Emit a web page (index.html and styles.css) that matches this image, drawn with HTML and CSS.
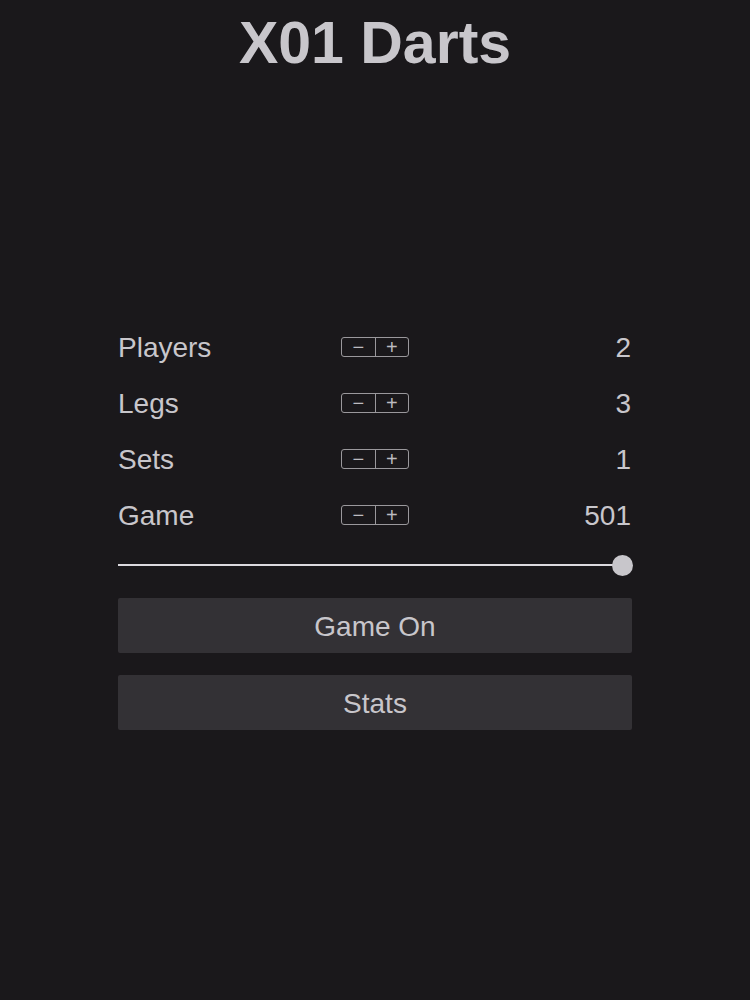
FILE: index.html
```html
<!DOCTYPE html>
<html>
<head>
<meta charset="utf-8">
<link rel="stylesheet" href="styles.css">
</head>
<body>
<h1 class="title">X01 Darts</h1>
<main class="panel">
  <div class="row"><span class="label">Players</span><span class="stepper"><span class="btn">−</span><span class="btn">+</span></span><span class="value">2</span></div>
  <div class="row"><span class="label">Legs</span><span class="stepper"><span class="btn">−</span><span class="btn">+</span></span><span class="value">3</span></div>
  <div class="row"><span class="label">Sets</span><span class="stepper"><span class="btn">−</span><span class="btn">+</span></span><span class="value">1</span></div>
  <div class="row"><span class="label">Game</span><span class="stepper"><span class="btn">−</span><span class="btn">+</span></span><span class="value">501</span></div>
  <div class="slider"><div class="track"></div><div class="thumb"></div></div>
  <button class="action">Game On</button>
  <button class="action">Stats</button>
</main>
</body>
</html>
```
FILE: styles.css
```css
html, body {
  margin: 0;
  background: #1a181b;
  color: #c8c6cb;
  font-family: "Liberation Sans", Arial, sans-serif;
}
body {
  width: 750px;
  height: 1000px;
}
.title {
  margin: 0;
  padding-top: 14px;
  font-size: 59px;
  line-height: 1;
  font-weight: bold;
  text-align: center;
  color: #c8c6cb;
}
.panel {
  width: 514px;
  margin: 246px auto 0;
  display: flex;
  flex-direction: column;
}
.row {
  height: 56px;
  display: grid;
  grid-template-columns: 223px 68px 1fr;
  align-items: center;
  font-size: 28px;
}
.label { line-height: 1; padding-top: 2px; }
.value { text-align: right; line-height: 1; padding-right: 1px; padding-top: 2px; }
.stepper {
  display: flex;
  height: 20px;
  border: 1px solid #9a989c;
  border-radius: 3px;
  box-sizing: border-box;
}
.btn {
  flex: 1;
  display: flex;
  align-items: center;
  justify-content: center;
  font-size: 20px;
  line-height: 1;
  color: #bdbbc0;
}
.btn + .btn { border-left: 1px solid #9a989c; }
.slider {
  position: relative;
  height: 22px;
  margin-top: 11px;
  display: flex;
  align-items: center;
}
.track {
  width: 100%;
  height: 2px;
  background: #dcdadf;
}
.thumb {
  position: absolute;
  right: -1px;
  top: 1px;
  width: 21px;
  height: 21px;
  border-radius: 50%;
  background: #c8c6cb;
}
.action {
  margin-top: 22px;
  height: 55px;
  border: none;
  border-radius: 2px;
  background: #333135;
  color: #c8c6cb;
  font-family: "Liberation Sans", Arial, sans-serif;
  font-size: 28px;
  padding: 2px 0 0;
}
```
